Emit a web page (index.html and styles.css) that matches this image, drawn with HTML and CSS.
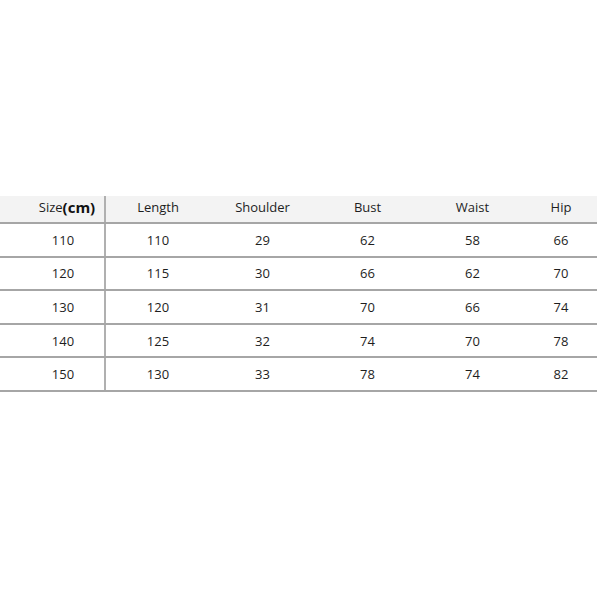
FILE: index.html
```html
<!DOCTYPE html>
<html>
<head>
<meta charset="utf-8">
<link rel="stylesheet" href="styles.css">
</head>
<body>
<div class="page">
  <div class="table">
    <div class="row head">
      <div class="cell first"><span>Size</span><b class="unit">(cm)</b></div>
      <div class="cell">Length</div>
      <div class="cell">Shoulder</div>
      <div class="cell">Bust</div>
      <div class="cell">Waist</div>
      <div class="cell">Hip</div>
    </div>
    <div class="row">
      <div class="cell first">110</div><div class="cell">110</div><div class="cell">29</div><div class="cell">62</div><div class="cell">58</div><div class="cell">66</div>
    </div>
    <div class="row">
      <div class="cell first">120</div><div class="cell">115</div><div class="cell">30</div><div class="cell">66</div><div class="cell">62</div><div class="cell">70</div>
    </div>
    <div class="row">
      <div class="cell first">130</div><div class="cell">120</div><div class="cell">31</div><div class="cell">70</div><div class="cell">66</div><div class="cell">74</div>
    </div>
    <div class="row">
      <div class="cell first">140</div><div class="cell">125</div><div class="cell">32</div><div class="cell">74</div><div class="cell">70</div><div class="cell">78</div>
    </div>
    <div class="row">
      <div class="cell first">150</div><div class="cell">130</div><div class="cell">33</div><div class="cell">78</div><div class="cell">74</div><div class="cell">82</div>
    </div>
  </div>
</div>
</body>
</html>
```

FILE: styles.css
```css
html, body {
  margin: 0;
  padding: 0;
  background: #ffffff;
}

.page {
  width: 600px;
  height: 600px;
  padding-top: 196px;
  box-sizing: border-box;
  font-family: "Open Sans", "Noto Sans", "DejaVu Sans", sans-serif;
  font-size: 13px;
  color: #1e1e1e;
}

.table {
  width: 597px;
}

.row {
  display: grid;
  grid-template-columns: 106px 104px 105px 105px 105px 72px;
  height: 33.6px;
  box-sizing: border-box;
  border-bottom: 2px solid #a6a6a6;
}

.row.head {
  height: 28px;
  background: #f3f3f3;
}

.cell {
  display: flex;
  align-items: center;
  justify-content: center;
}

.cell.first {
  border-right: 2px solid #b0b0b0;
  padding-left: 22px;
}

.head .cell {
  padding-bottom: 4px;
}

.head .cell.first {
  padding-left: 30px;
}

.unit {
  font-size: 15px;
  font-weight: 700;
  color: #111;
}
```
